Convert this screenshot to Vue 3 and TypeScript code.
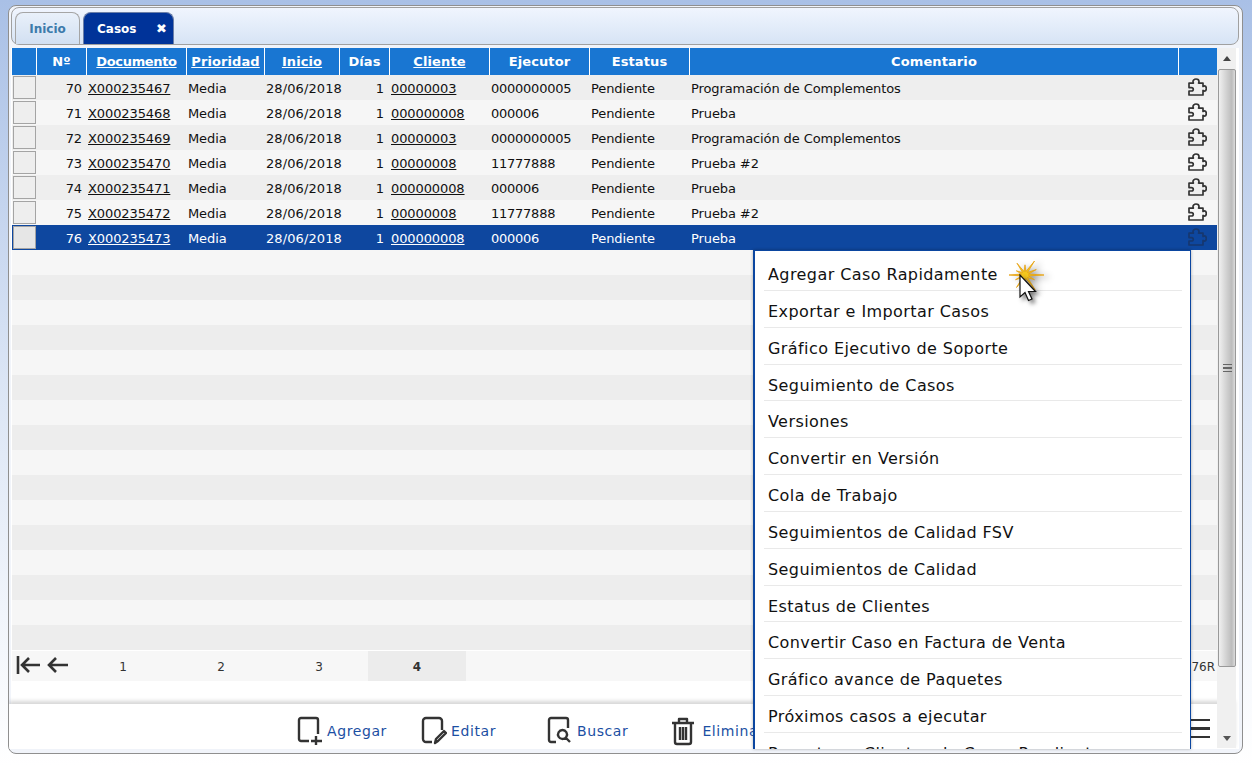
<script setup lang="ts">
interface Row { n: number; doc: string; cli: string; eje: string; com: string }
const rows: Row[] = [
  { n: 70, doc: 'X000235467', cli: '00000003', eje: '0000000005', com: 'Programación de Complementos' },
  { n: 71, doc: 'X000235468', cli: '000000008', eje: '000006', com: 'Prueba' },
  { n: 72, doc: 'X000235469', cli: '00000003', eje: '0000000005', com: 'Programación de Complementos' },
  { n: 73, doc: 'X000235470', cli: '00000008', eje: '11777888', com: 'Prueba #2' },
  { n: 74, doc: 'X000235471', cli: '000000008', eje: '000006', com: 'Prueba' },
  { n: 75, doc: 'X000235472', cli: '00000008', eje: '11777888', com: 'Prueba #2' },
  { n: 76, doc: 'X000235473', cli: '000000008', eje: '000006', com: 'Prueba' }
]
const emptyRows = Array.from({ length: 16 }, (_, i) => i)
const menu: string[] = [
  'Agregar Caso Rapidamente', 'Exportar e Importar Casos', 'Gráfico Ejecutivo de Soporte',
  'Seguimiento de Casos', 'Versiones', 'Convertir en Versión', 'Cola de Trabajo',
  'Seguimientos de Calidad FSV', 'Seguimientos de Calidad', 'Estatus de Clientes',
  'Convertir Caso en Factura de Venta', 'Gráfico avance de Paquetes',
  'Próximos casos a ejecutar', 'Reportes a Clientes de Casos Pendientes'
]
const pages = [1, 2, 3, 4]
const puzzle = 'M9 1c1.800 0 3 1.200 3 2.600 0 .6-.2 1.100-.4 1.500h4.400v3.400c.5-.4 1-.6 1.300-.6 1.200 0 2 1.100 2 2.600s-.8 2.600-2 2.600c-.3 0-.8-.2-1.300-.6v4.500H2v-4h2.400c1.200 0 1.900-.8 1.900-1.700s-.7-1.700-1.900-1.700H2V5.100h4.400C6.200 4.700 6 4.200 6 3.600 6 2.200 7.200 1 9 1z'
const rays = [19, 11, 20, 12, 17, 11, 16, 10, 16, 12, 19, 13]
const starPoints = rays.flatMap((len, i) => {
  const a = (i / rays.length) * Math.PI * 2
  const b = ((i + 0.5) / rays.length) * Math.PI * 2
  return [
    `${(22 + Math.cos(a) * len).toFixed(1)},${(14 + Math.sin(a) * len * 0.85).toFixed(1)}`,
    `${(22 + Math.cos(b) * 3.5).toFixed(1)},${(14 + Math.sin(b) * 3.5).toFixed(1)}`
  ]
}).join(' ')
</script>

<template>
  <div class="window">
    <div class="tabbar">
      <div class="tab idle">Inicio</div>
      <div class="tab active"><span>Casos</span><span class="close">✖</span></div>
    </div>

    <div class="body">
      <div class="main">
        <div class="grid">
          <div class="row head">
            <div class="c c0"></div>
            <div class="c c1">Nº</div>
            <div class="c c2"><u>Documento</u></div>
            <div class="c c3"><u>Prioridad</u></div>
            <div class="c c4"><u>Inicio</u></div>
            <div class="c c5">Días</div>
            <div class="c c6"><u>Cliente</u></div>
            <div class="c c7">Ejecutor</div>
            <div class="c c8">Estatus</div>
            <div class="c c9">Comentario</div>
            <div class="c c10"></div>
          </div>
          <div v-for="r in rows" :key="r.n" class="row data" :class="{ sel: r.n === 76 }">
            <div class="c c0"><span class="box"></span></div>
            <div class="c c1">{{ r.n }}</div>
            <div class="c c2"><u>{{ r.doc }}</u></div>
            <div class="c c3">Media</div>
            <div class="c c4 date">28/06/2018</div>
            <div class="c c5">1</div>
            <div class="c c6"><u>{{ r.cli }}</u></div>
            <div class="c c7">{{ r.eje }}</div>
            <div class="c c8">Pendiente</div>
            <div class="c c9">{{ r.com }}</div>
            <div class="c c10">
              <svg class="puzzle" viewBox="0 0 20 20" width="20" height="20"><path :d="puzzle" /></svg>
            </div>
          </div>
          <div v-for="i in emptyRows" :key="'e' + i" class="row data blank"></div>
        </div>

        <div class="pager">
          <svg class="arrow first" viewBox="0 0 26 20" width="26" height="20">
            <path d="M2 1v18M24 10H6M13 3l-7 7 7 7" />
          </svg>
          <svg class="arrow prev" viewBox="0 0 24 20" width="24" height="20">
            <path d="M22 10H3M10 3l-7 7 7 7" />
          </svg>
          <div class="pages">
            <div v-for="p in pages" :key="p" class="page" :class="{ on: p === 4 }">{{ p }}</div>
          </div>
          <div class="count">76R</div>
        </div>

        <div class="toolbar">
          <div class="tool t1">
            <svg viewBox="0 0 26 30" width="26" height="30" class="ti">
              <path d="M12 25H4a2 2 0 0 1-2-2V4a2 2 0 0 1 2-2h15a2 2 0 0 1 2 2v14M19 20v9M14 25h11" />
            </svg>
            <span>Agregar</span>
          </div>
          <div class="tool t2">
            <svg viewBox="0 0 26 30" width="26" height="30" class="ti">
              <path d="M11 26H5a3 3 0 0 1-3-3V5a3 3 0 0 1 3-3h13a3 3 0 0 1 3 3v9M14 27l1-4 8-8 2 2-8 8z" />
            </svg>
            <span>Editar</span>
          </div>
          <div class="tool t3">
            <svg viewBox="0 0 26 30" width="26" height="30" class="ti">
              <path d="M9 26H4a2 2 0 0 1-2-2V4a2 2 0 0 1 2-2h15a2 2 0 0 1 2 2v8M15.500 14a4.500 4.500 0 1 0 .01 0zM19 22l4 4" />
            </svg>
            <span>Buscar</span>
          </div>
          <div class="tool t4">
            <svg viewBox="0 0 26 30" width="26" height="30" class="ti">
              <path d="M2 7h22M9 7V3h8v4M5 7v19a2 2 0 0 0 2 2h12a2 2 0 0 0 2-2V7M10 11v13M13 11v13M16 11v13" />
            </svg>
            <span>Eliminar</span>
          </div>
          <div class="spacer"></div>
          <div class="burger"><i></i><i></i><i></i></div>
        </div>
      </div>

      <div class="scroll">
        <div class="sb-up"></div>
        <div class="thumb"><div class="grip"><i></i><i></i><i></i></div></div>
        <div class="sb-space"></div>
        <div class="sb-down"></div>
      </div>
    </div>

    <div class="menu">
      <div v-for="m in menu" :key="m" class="item"><span>{{ m }}</span></div>
    </div>

    <svg class="pointer" viewBox="0 0 44 44" width="44" height="44">
      <polygon class="star" :points="starPoints" fill="#f5c71f" stroke="#e6a00e" stroke-width="0.800" />
      <path class="cur" d="M17 14v22l5-4.500 3.500 8 3.500-1.500-3.500-7.500h7z" fill="#fff" stroke="#111" stroke-width="1.200" />
    </svg>
  </div>
</template>

<style>
html, body {
  margin: 0;
  height: 766px;
  overflow: hidden;
  background: linear-gradient(to bottom, #a9c0e6 0, #dbe5f5 380px, #ffffff 766px);
}
</style>

<style scoped>
.window {
  position: relative;
  box-sizing: border-box;
  width: 1235px;
  height: 749px;
  margin: 0 0 0 8px;
  top: 5px;
  border: 1px solid #8f8f8f;
  border-radius: 8px;
  background: #f1f4fa;
  display: flex;
  flex-direction: column;
  padding: 1px 3px 4px 2px;
  font-family: "DejaVu Sans", Verdana, sans-serif;
  overflow: hidden;
}
.tabbar {
  box-sizing: border-box;
  height: 38px;
  flex: none;
  border: 1px solid #a0a0a0;
  border-radius: 8px;
  background: linear-gradient(to bottom, #f0f5fe, #d7e4f5);
  display: flex;
  align-items: flex-end;
  padding-left: 3px;
  gap: 3px;
}
.tab {
  box-sizing: border-box;
  height: 32px;
  border-radius: 8px 8px 0 0;
  font-weight: bold;
  font-size: 12px;
  display: flex;
  align-items: center;
}
.idle {
  width: 65px;
  justify-content: center;
  color: #3d7bab;
  border: 1px solid #a5a5a5;
  border-bottom: none;
  background: linear-gradient(to bottom, #e9f0fa, #d2e0f2);
}
.active {
  width: 91px;
  background: #003399;
  border: 1px solid #6b7fa8;
  border-bottom: none;
  color: #fff;
  justify-content: space-between;
  padding: 0 6px 0 13px;
}
.close { font-size: 13px; }
.body {
  flex: 1;
  min-height: 0;
  display: flex;
  margin-top: 3px;
  padding-left: 1px;
  background: #fff;
}
.main {
  width: 1205px;
  flex: none;
  display: flex;
  flex-direction: column;
  min-height: 0;
}
.grid { flex: none; }
.row {
  display: flex;
  box-sizing: border-box;
  height: 25px;
  padding-top: 1px;
  font-size: 13px;
  letter-spacing: -0.1px;
  color: #111;
}
.head {
  height: 27px;
  padding-top: 0;
  background: #1976d2;
  color: #fff;
  font-weight: bold;
  font-size: 13px;
  letter-spacing: 0.1px;
}
.head .c {
  border-right: 1px solid #fff;
  justify-content: center;
  padding: 0;
  letter-spacing: 0.1px;
}
.head .c2 { letter-spacing: -0.35px; }
.head .c10 { border-right: none; }
.data:nth-child(even) { background: #eeeeee; }
.data:nth-child(odd) { background: #f6f6f6; }
.data.blank:nth-child(even) { background: #ededed; }
.data.blank:nth-child(odd) { background: #f6f6f6; }
.data.sel { background: #0e479f; color: #fff; }
.c {
  box-sizing: border-box;
  display: flex;
  align-items: center;
  flex: none;
  padding-left: 1px;
  white-space: nowrap;
}
.c0 { width: 25px; padding: 0 0 0 1px; align-items: flex-start; }
.c1 { width: 50px; justify-content: flex-end; padding-right: 5px; }
.c2 { width: 100px; padding-left: 1px; }
.c3 { width: 78px; }
.c4 { width: 75px; padding-left: 1px; }
.date { letter-spacing: 0.1px; }
.c5 { width: 50px; justify-content: flex-end; padding-right: 6px; }
.c6 { width: 100px; }
.c7 { width: 100px; letter-spacing: -0.25px; }
.c8 { width: 100px; }
.c9 { width: 489px; }
.c10 { width: 38px; padding-left: 8px; }
.box {
  box-sizing: border-box;
  display: block;
  width: 23px;
  height: 23px;
  border: 1px solid #a4a4a4;
  background: #eeeeee;
}
.sel .box { background: #e6e6e6; }
.puzzle { display: block; }
.puzzle path { fill: none; stroke: #333; stroke-width: 1.700; stroke-linejoin: round; }
.sel .puzzle path { stroke: #16376f; }
.pager {
  flex: none;
  height: 30px;
  margin-top: 1px;
  background: #f7f7f7;
  display: flex;
  align-items: center;
  position: relative;
  font-size: 12px;
  color: #333;
}
.arrow { margin-bottom: 2px; }
.arrow path { fill: none; stroke: #333; stroke-width: 2.600; }
.first { margin-left: 4px; }
.prev { margin-left: 4px; }
.pages { display: flex; align-self: stretch; margin-left: 4px; }
.page {
  width: 98px;
  display: flex;
  align-items: center;
  justify-content: center;
  padding-top: 2px;
  box-sizing: border-box;
}
.page.on { background: #ececec; font-weight: bold; }
.count { margin-left: auto; padding-right: 2px; padding-top: 2px; }
.toolbar {
  flex: none;
  box-sizing: border-box;
  margin: 23px 0 0 -3px;
  height: 45px;
  width: 1226px;
  padding-top: 8px;
  background: #fff;
  box-shadow: 0 -3px 4px rgba(0, 0, 0, 0.16);
  display: flex;
  align-items: center;
  position: relative;
  font-size: 14px;
  letter-spacing: 0.6px;
  color: #1c4fa3;
}
.tool { display: flex; align-items: center; gap: 4px; }
.ti { display: block; }
.ti path { fill: none; stroke: #333; stroke-width: 2.400; stroke-linejoin: round; }
.t1 { margin-left: 288px; }
.t2 { margin-left: 34px; }
.t3 { margin-left: 51px; }
.t4 { margin-left: 42px; gap: 6px; }
.spacer { flex: 1; }
.burger { width: 20px; margin-right: 25px; display: flex; flex-direction: column; gap: 6px; margin-top: -4px; }
.burger i { display: block; height: 2.500px; background: #333; }
.scroll {
  width: 19px;
  flex: none;
  background: #f0f0f0;
  display: flex;
  flex-direction: column;
  position: relative;
  z-index: 1;
  margin-bottom: 1px;
}
.sb-up, .sb-down { height: 20px; flex: none; display: flex; align-items: center; justify-content: center; }
.sb-up::before { content: ""; border: 4px solid transparent; border-top: none; border-bottom: 5px solid #444; }
.sb-down::before { content: ""; border: 4px solid transparent; border-bottom: none; border-top: 5px solid #555; }
.thumb {
  box-sizing: border-box;
  height: 598px;
  margin: 1px 0 0 1px;
  border: 1px solid #999;
  border-radius: 2px;
  background: linear-gradient(to right, #f0f0f0, #cfcfcf 50%, #bcbcbc 80%, #dcdcdc);
  display: flex;
  align-items: center;
  justify-content: center;
  flex: none;
}
.grip { width: 9px; display: flex; flex-direction: column; gap: 2px; }
.grip i { display: block; height: 1.500px; background: #666; }
.sb-space { flex: 1; }
.menu {
  position: absolute;
  left: 744px;
  top: 244px;
  width: 438px;
  height: 499px;
  box-sizing: border-box;
  background: #fff;
  border: 1px solid #0b46a0;
  border-left-width: 2px;
  border-bottom: none;
  padding: 3px 8px 0 9px;
  overflow: hidden;
  box-shadow: 0 0 3px rgba(0, 0, 0, 0.3);
  font-size: 16px;
  letter-spacing: 0.42px;
  color: #111;
  z-index: 2;
}
.item {
  box-sizing: border-box;
  height: 36.850px;
  border-bottom: 1px solid #e9e9e9;
  padding: 10px 0 0 4px;
  white-space: nowrap;
  line-height: 22px;
}
.pointer {
  position: absolute;
  left: 994px;
  top: 255px;
  z-index: 3;
  overflow: visible;
}
.star { filter: drop-shadow(5px 2px 3px rgba(0, 0, 0, 0.4)); }
.cur { filter: drop-shadow(3px 3px 2px rgba(0, 0, 0, 0.5)); }
</style>
